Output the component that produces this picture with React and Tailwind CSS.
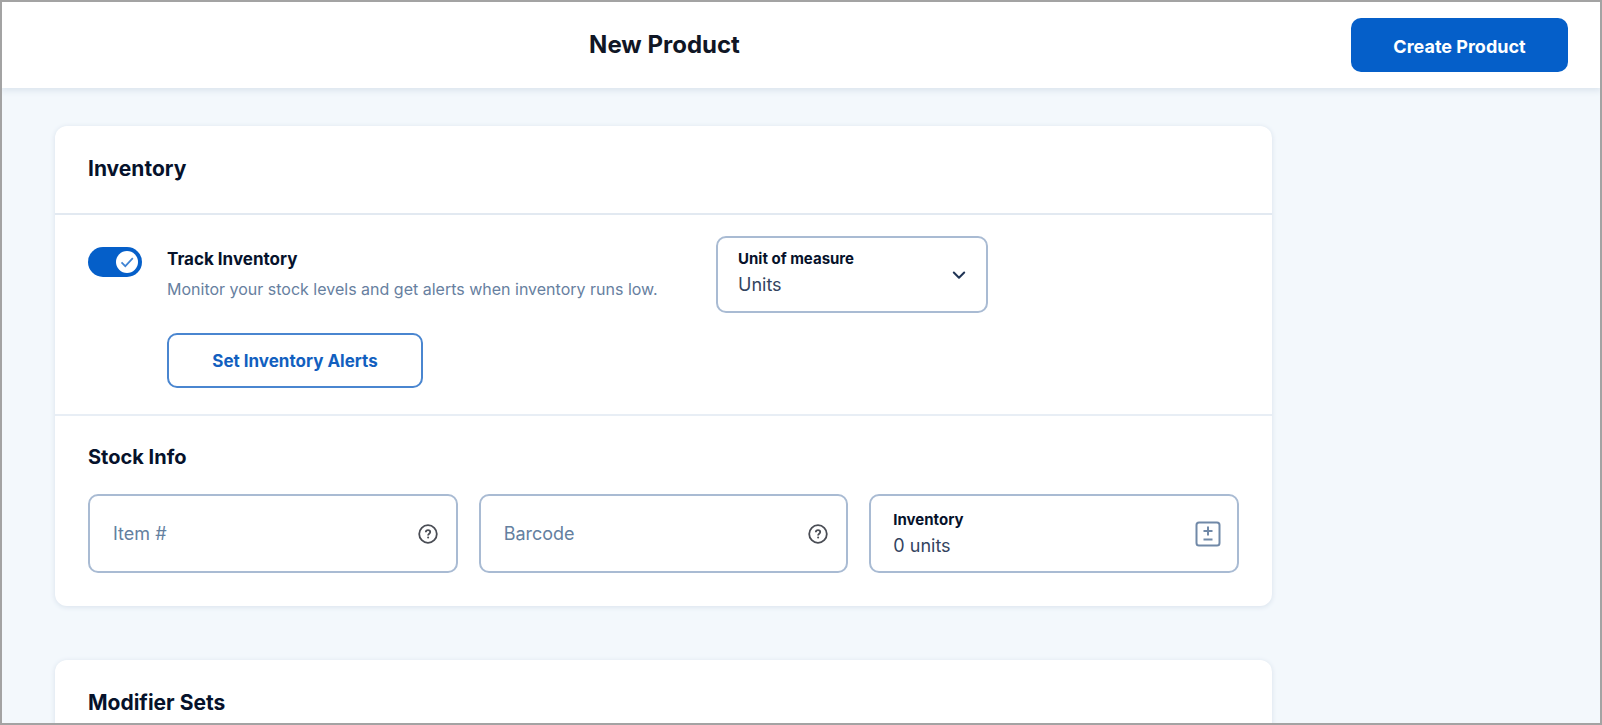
import { useState } from "react";

const FIELD =
  "flex items-center rounded-[10px] border-2 border-[#a9bbd3] bg-white";

function CheckIcon() {
  return (
    <svg viewBox="0 0 22 22" className="size-[22px]" fill="none">
      <path d="M5.5 11.4 9.3 15.2 16.8 7.2" stroke="#3f83d3" strokeWidth="1.7" />
    </svg>
  );
}

function ChevronIcon() {
  return (
    <svg viewBox="0 0 14 14" className="size-[14px]" fill="none">
      <path
        d="M1.8 4.5 7 9.7 12.2 4.5"
        stroke="#1f3354"
        strokeWidth="2"
        strokeLinecap="round"
        strokeLinejoin="round"
      />
    </svg>
  );
}

function HelpIcon() {
  return (
    <svg viewBox="0 0 20 20" className="size-5" fill="none" stroke="#4a4d55">
      <circle cx="10" cy="10" r="8.8" strokeWidth="1.8" />
      <path
        d="M7.8 8.2C7.9 6.9 8.8 6.2 10 6.2s2.2.8 2.2 1.9c0 1.6-2.1 1.6-2.1 3.3"
        strokeWidth="1.8"
      />
      <circle cx="10.1" cy="13.6" r="1" fill="#4a4d55" stroke="none" />
    </svg>
  );
}

function AdjustIcon() {
  return (
    <svg viewBox="0 0 26 26" className="size-[26px]" fill="none" stroke="#7189a8">
      <rect x="1.5" y="1.5" width="23" height="23" rx="2.5" strokeWidth="2" />
      <path d="M13 5.5v9M8.5 10h9M8.5 18.5h9" strokeWidth="2" />
    </svg>
  );
}

function TextField({ id, label, value, onChange }) {
  return (
    <div className={`${FIELD} h-[79px] pr-[18px] pl-[23px]`}>
      <input
        id={id}
        type="text"
        aria-label={label}
        placeholder={label}
        value={value}
        onChange={(e) => onChange(e.target.value)}
        className="min-w-0 flex-1 text-[18px] text-[#33445f] outline-none placeholder:text-[#64809f]"
      />
      <button type="button" aria-label={`${label} help`}>
        <HelpIcon />
      </button>
    </div>
  );
}

function Card({ title, children }) {
  return (
    <section className="rounded-[12px] bg-white shadow-[0_1px_4px_1px_#dfe7f0]">
      <h2 className="border-b-2 border-[#e2e9f1] px-[33px] pt-7 pb-[29px] text-[21px] leading-[30px] font-bold text-[#06122b]">
        {title}
      </h2>
      {children}
    </section>
  );
}

export default function App() {
  const [track, setTrack] = useState(true);
  const [unit, setUnit] = useState("Units");
  const [item, setItem] = useState("");
  const [barcode, setBarcode] = useState("");
  const [stock, setStock] = useState("0 units");

  return (
    <div className="flex h-screen flex-col overflow-hidden border-2 border-[#a3a3a3] bg-[#f3f8fc] font-['Inter',sans-serif] text-[#06122b]">
      <header className="z-10 flex shrink-0 items-center gap-6 bg-white py-4 pr-8 shadow-[0_2px_6px_1px_#dce5ee]">
        <h1 className="flex-1 text-center text-[24px] leading-8 font-bold text-[#101625]">
          New Product
        </h1>
        <button
          type="button"
          className="h-[54px] w-[217px] rounded-[10px] bg-[#055fc9] pt-0.5 text-[18px] font-bold text-white"
        >
          Create Product
        </button>
      </header>

      <main className="flex flex-col gap-[54px] pt-[38px] pr-[328px] pl-[53px]">
        <Card title="Inventory">
          <div className="grid grid-cols-[628fr_523fr] border-b-2 border-[#e8eef5] px-[33px] pt-[21px] pb-[26px]">
            <div className="flex gap-[25px] pt-[11px]">
              <label
                className={`relative flex h-[30px] w-[54px] shrink-0 cursor-pointer items-center rounded-full px-1 ${
                  track ? "justify-end bg-[#055fc9]" : "justify-start bg-[#a9bbd3]"
                }`}
              >
                <input
                  type="checkbox"
                  role="switch"
                  aria-label="Track Inventory"
                  checked={track}
                  onChange={(e) => setTrack(e.target.checked)}
                  className="absolute inset-0 cursor-pointer appearance-none"
                />
                <span className="rounded-full bg-white">
                  <CheckIcon />
                </span>
              </label>
              <div>
                <h3 className="text-[17px] leading-6 font-bold">Track Inventory</h3>
                <p className="mt-1.5 text-[16px] leading-6 whitespace-nowrap text-[#6780a0]">
                  Monitor your stock levels and get alerts when inventory runs low.
                </p>
                <button
                  type="button"
                  className="mt-8 h-[55px] w-[256px] rounded-[10px] border-2 border-[#4a86d0] pt-0.5 text-[17px] font-bold text-[#125fbf]"
                >
                  Set Inventory Alerts
                </button>
              </div>
            </div>

            <div className={`${FIELD} relative h-[77px] w-[272px]`}>
              <div className="flex flex-1 flex-col pb-1">
                <label htmlFor="unit" className="px-5 text-[15px] leading-6 font-bold">
                  Unit of measure
                </label>
                <select
                  id="unit"
                  value={unit}
                  onChange={(e) => setUnit(e.target.value)}
                  className="appearance-none px-5 text-[18px] leading-7 text-[#33445f] outline-none"
                >
                  <option>Units</option>
                </select>
              </div>
              <span className="pointer-events-none absolute right-5">
                <ChevronIcon />
              </span>
            </div>
          </div>

          <div className="px-[33px] pt-[26px] pb-[33px]">
            <h3 className="text-[20px] leading-[30px] font-bold">Stock Info</h3>
            <div className="mt-[22px] grid grid-cols-3 gap-[21px]">
              <TextField id="item" label="Item #" value={item} onChange={setItem} />
              <TextField id="barcode" label="Barcode" value={barcode} onChange={setBarcode} />
              <div className={`${FIELD} h-[79px] pr-4 pl-[22px]`}>
                <div className="flex min-w-0 flex-1 flex-col">
                  <label htmlFor="stock" className="text-[15px] leading-6 font-bold">
                    Inventory
                  </label>
                  <input
                    id="stock"
                    type="text"
                    value={stock}
                    onChange={(e) => setStock(e.target.value)}
                    className="min-w-0 text-[18px] leading-7 text-[#33445f] outline-none"
                  />
                </div>
                <button type="button" aria-label="Adjust inventory">
                  <AdjustIcon />
                </button>
              </div>
            </div>
          </div>
        </Card>

        <Card title="Modifier Sets" />
      </main>
    </div>
  );
}
